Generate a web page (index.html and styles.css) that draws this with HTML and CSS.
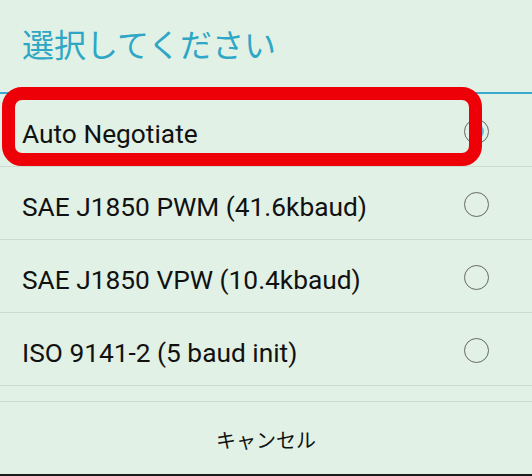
FILE: index.html
```html
<!DOCTYPE html>
<html lang="ja">
<head>
    <meta charset="UTF-8">
    <meta name="viewport" content="width=device-width, initial-scale=1.0">
    <title>選択してください</title>
    <link rel="stylesheet" href="styles.css">
</head>
<body>
    <div class="dialog">
        <h1 class="dialog-title">選択してください</h1>
        <ul class="options">
            <li class="option selected">
                <span class="label">Auto Negotiate</span>
                <span class="radio"></span>
                <span class="highlight"></span>
            </li>
            <li class="option">
                <span class="label">SAE J1850 PWM (41.6kbaud)</span>
                <span class="radio"></span>
            </li>
            <li class="option">
                <span class="label">SAE J1850 VPW (10.4kbaud)</span>
                <span class="radio"></span>
            </li>
            <li class="option">
                <span class="label">ISO 9141-2 (5 baud init)</span>
                <span class="radio"></span>
            </li>
        </ul>
        <div class="actions">
            <button class="cancel-btn">キャンセル</button>
        </div>
    </div>
</body>
</html>
```

FILE: styles.css
```css
body { margin: 0; padding: 0; background-color: #1a1a1a; font-family: Roboto, "Noto Sans CJK JP", sans-serif; }
.dialog { width: 532px; height: 474px; background-color: #e1f1e5; display: flex; flex-direction: column; overflow: hidden; }
.dialog-title { margin: 0; height: 94px; box-sizing: border-box; padding: 22px 0 0 22px; font-size: 32px; font-weight: normal; line-height: 42px; color: #2ea7c6; font-family: "Noto Sans CJK JP", sans-serif; border-bottom: 2px solid #3aa9cf; }
.options { list-style-type: none; margin: 0; padding: 0; }
.option { position: relative; height: 73px; box-sizing: border-box; display: flex; align-items: center; justify-content: space-between; padding: 0 43px 0 22px; border-bottom: 1px solid #cddbd1; }
.label { font-size: 26.3px; color: #111; padding-top: 7px; }
.radio { width: 23px; height: 23px; border: 1.3px solid #666; border-radius: 50%; display: flex; align-items: center; justify-content: center; margin-top: 2px; }
.selected .radio::after { content: ""; width: 15px; height: 15px; border-radius: 50%; background-color: #6cb8d8; }
.highlight { position: absolute; left: 2px; top: -7px; width: 480px; height: 79px; box-sizing: border-box; border: 13px solid #ee0008; border-radius: 20px; }
.actions { margin-top: 15px; border-top: 1px solid #cddbd1; flex: 1; display: flex; align-items: center; justify-content: center; }
.cancel-btn { background: none; border: none; font-family: "Noto Sans CJK JP", sans-serif; font-size: 20px; color: #111; padding: 0; margin-top: 2px; }
```
